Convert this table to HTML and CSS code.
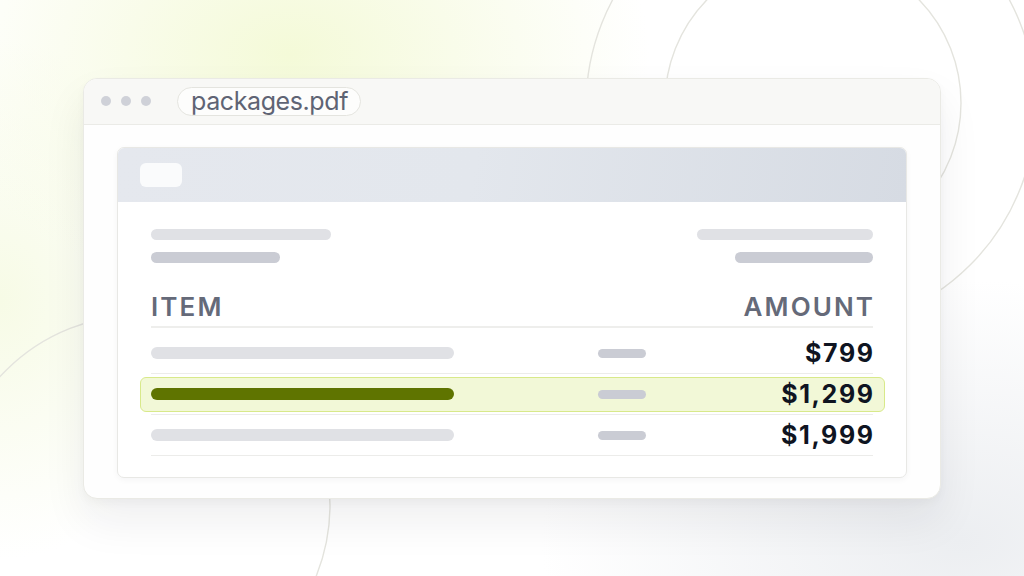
FILE: index.html
```html
<!DOCTYPE html>
<html lang="en">
<head>
<meta charset="utf-8">
<title>packages.pdf</title>
<link rel="stylesheet" href="styles.css">
</head>
<body>
<svg class="rings" width="1024" height="576" viewBox="0 0 1024 576" aria-hidden="true">
  <circle cx="813" cy="103" r="148"/>
  <circle cx="811" cy="106" r="225"/>
  <circle cx="140" cy="505" r="190"/>
</svg>
<main class="stage">
  <section class="window">
    <header class="titlebar">
      <div class="dots"><span></span><span></span><span></span></div>
      <div class="tab">packages.pdf</div>
    </header>
    <div class="win-body">
      <article class="doc">
        <div class="doc-head"><span class="chip"></span></div>
        <div class="doc-body">
          <div class="meta">
            <div class="meta-col">
              <span class="sk light" style="width:180px"></span>
              <span class="sk dark" style="width:129px"></span>
            </div>
            <div class="meta-col right">
              <span class="sk light" style="width:176px"></span>
              <span class="sk dark" style="width:138px"></span>
            </div>
          </div>
          <div class="thead"><span>ITEM</span><span>AMOUNT</span></div>
          <div class="row">
            <div class="cell">
              <span class="bar name"></span>
              <span class="bar qty"></span>
              <span class="price">$799</span>
            </div>
          </div>
          <div class="row">
            <div class="cell active">
              <span class="bar name"></span>
              <span class="bar qty"></span>
              <span class="price">$1,299</span>
            </div>
          </div>
          <div class="row">
            <div class="cell">
              <span class="bar name"></span>
              <span class="bar qty"></span>
              <span class="price">$1,999</span>
            </div>
          </div>
        </div>
      </article>
    </div>
  </section>
</main>
</body>
</html>
```

FILE: styles.css
```css
* { box-sizing: border-box; }
html, body { margin: 0; height: 100%; }
body {
  width: 1024px;
  height: 576px;
  overflow: hidden;
  position: relative;
  font-family: Inter, "Liberation Sans", sans-serif;
  background:
    radial-gradient(ellipse 360px 250px at 290px 55px, #f4fad8 0%, rgba(245,250,220,0.55) 50%, rgba(255,255,255,0) 100%),
    radial-gradient(ellipse 200px 260px at 0px 300px, #f7fbe6 0%, rgba(247,251,230,0) 100%),
    radial-gradient(ellipse 420px 260px at 960px 540px, #eceef1 0%, rgba(236,238,241,0) 100%),
    #ffffff;
}
.rings {
  position: absolute;
  left: 0; top: 0;
  fill: none;
  stroke: #e4e4de;
  stroke-width: 1.4;
}
.stage {
  position: relative;
  height: 576px;
  display: flex;
  align-items: center;
  justify-content: center;
}
.window {
  width: 858px;
  height: 421px;
  border: 1px solid #eaeae5;
  border-radius: 14px;
  background: #fefefe;
  box-shadow: 0 22px 44px rgba(30, 35, 45, 0.07), 0 4px 10px rgba(30, 35, 45, 0.03);
  overflow: hidden;
  display: flex;
  flex-direction: column;
}
.titlebar {
  height: 46px;
  flex: none;
  background: #f8f8f6;
  border-bottom: 1px solid #ebebe7;
  display: flex;
  align-items: center;
  padding-left: 17px;
}
.dots { display: flex; gap: 10px; }
.dots span {
  width: 10px; height: 10px;
  border-radius: 50%;
  background: #cfd1d8;
}
.tab {
  margin-left: 26px;
  height: 29px;
  padding: 0 12px 0 13px;
  border: 1px solid #e4e4df;
  border-radius: 15px;
  background: #fdfdfc;
  display: flex;
  align-items: center;
  font-size: 25px;
  color: #5f6474;
  letter-spacing: -0.4px;
}
.win-body {
  flex: 1;
  padding: 22px 33px 20px;
}
.doc {
  height: 331px;
  border: 1px solid #e8e8e5;
  border-radius: 7px;
  background: #ffffff;
  box-shadow: 0 2px 6px rgba(30, 35, 45, 0.04);
  overflow: hidden;
}
.doc-head {
  height: 54px;
  background: linear-gradient(100deg, #e5e8ee 0%, #e3e7ed 45%, #d6dbe3 100%);
  display: flex;
  align-items: center;
  padding-left: 22px;
}
.chip {
  width: 42px; height: 24px;
  border-radius: 6px;
  background: #fafbfc;
}
.doc-body { padding: 27px 33px 0; }
.meta { display: flex; justify-content: space-between; }
.meta-col { display: flex; flex-direction: column; gap: 12px; }
.meta-col.right { align-items: flex-end; }
.sk { display: block; height: 11px; border-radius: 6px; }
.sk.light { background: #e0e1e5; }
.sk.dark { background: #caccd4; }
.thead {
  margin-top: 31px;
  display: flex;
  justify-content: space-between;
  font-size: 26px;
  line-height: 26px;
  font-weight: 600;
  letter-spacing: 2.1px;
  color: #656a79;
  padding-bottom: 6px;
  border-bottom: 2px solid #eeeeec;
}
.thead span:last-child { margin-right: -2.1px; }
.row {
  height: 41px;
  border-bottom: 1px solid #ececea;
  padding-top: 3px;
}
.thead + .row { margin-top: 5px; }
.cell {
  height: 35px;
  margin: 0 -12px 0 -11px;
  padding: 0 11px 0 10px;
  border: 1px solid transparent;
  border-radius: 6px;
  display: grid;
  grid-template-columns: 447px 48px 1fr;
  align-items: center;
}
.cell.active {
  background: #f2f8d7;
  border-color: #d8e98a;
}
.bar { display: block; border-radius: 6px; }
.bar.name { width: 303px; height: 12px; background: #e0e1e5; }
.bar.qty { width: 48px; height: 9px; background: #caccd4; }
.active .bar.name { background: #5f7400; }
.price {
  justify-self: end;
  font-size: 25px;
  font-weight: 700;
  color: #0f1421;
  letter-spacing: 1.6px;
  margin-right: -1.6px;
}
```
